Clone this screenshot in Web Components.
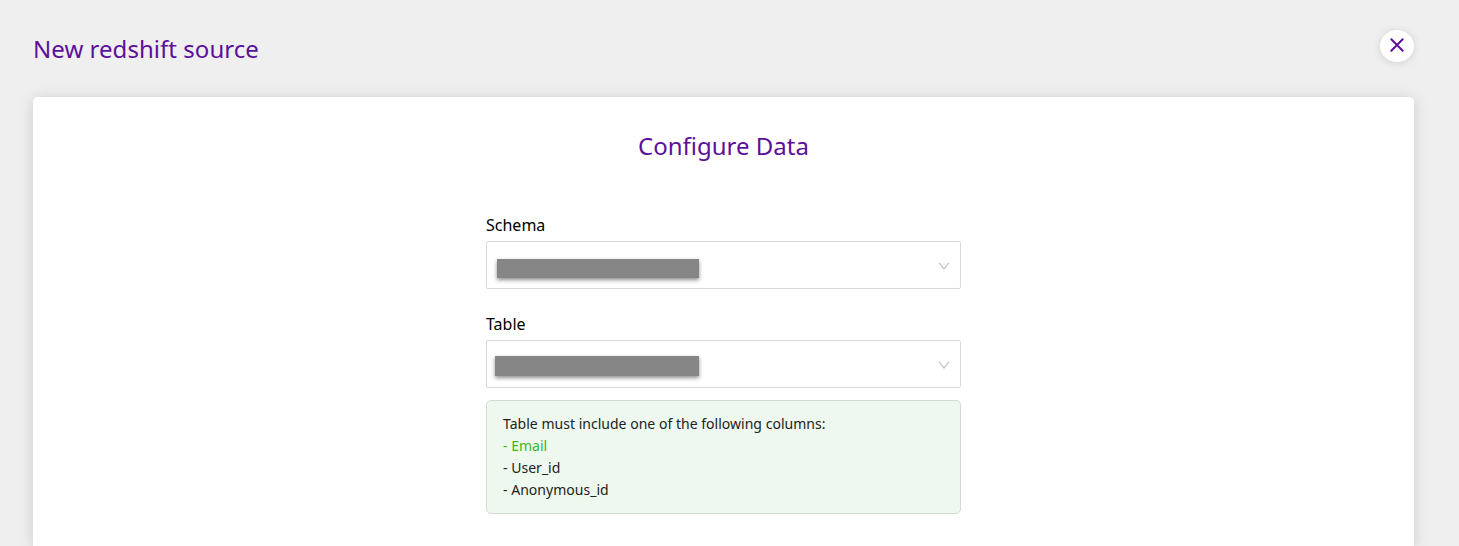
<!DOCTYPE html>
<html lang="en"><head><meta charset="utf-8"><title>New redshift source</title>
<style>html,body{margin:0;height:546px;overflow:hidden;background:#efefef}</style></head>
<body><source-page></source-page>
<script>
const define=(name,html)=>customElements.define(name,class extends HTMLElement{
 constructor(){super();this.attachShadow({mode:'open'}).innerHTML=html;}
});
define('close-button',`<style>:host{display:block}button{box-sizing:border-box;width:34px;height:32px;border:0;border-radius:50%;padding:0 0 2px;background:#fff;box-shadow:0 1px 8px rgba(0,0,0,.13);display:flex;align-items:center;justify-content:center}svg{display:block}</style>
<button aria-label="Close"><svg width="16" height="16" viewBox="0 0 16 16" fill="none" stroke="#5c0f9b" stroke-width="2" stroke-linecap="round"><path d="M2.3 2.3L13.7 13.7M13.7 2.3L2.3 13.7"/></svg></button>`);
define('select-field',`<style>:host{display:block}label{display:block;font-size:16px;line-height:22px;color:#000;margin-bottom:5px}
.box{box-sizing:border-box;height:48px;border:1px solid #d9d9d9;border-radius:2px;background:#fff;display:flex;justify-content:space-between;padding:0 10px 0 var(--inset,10px)}
.value{width:var(--bar-width,202px);height:var(--bar-height,19px);margin-top:var(--bar-top,17px);background:#868686;box-shadow:0 2px 4px rgba(0,0,0,.45)}
svg{display:block;align-self:center;margin-top:1px}</style>
<label><slot></slot></label><div class="box"><div class="value"></div><svg width="12" height="12" viewBox="0 0 12 12" fill="none" stroke="#bfbfbf" stroke-width="1.1"><path d="M1.2 2.8L6 9L10.8 2.8"/></svg></div>`);
define('column-notice',`<style>:host{display:block;box-sizing:border-box;height:114px;border:1px solid #d5d9d4;border-radius:5px;background:#eff8ee;padding:12px 16px;font-size:14px;line-height:22px;letter-spacing:.02px;color:#222}</style><slot></slot>`);
define('config-card',`<style>:host{display:block;box-sizing:border-box;flex:1;margin:0 45px 0 33px;border-radius:5px 5px 0 0;background:#fff;box-shadow:0 2px 15px rgba(0,0,0,.15);padding-top:32px}
h2{margin:0 0 51px;text-align:center;font-weight:400;font-size:24px;line-height:34px;color:#5c0f9b}.form{width:475px;margin:0 auto}</style><h2>Configure Data</h2><div class="form"><slot></slot></div>`);
define('source-page',`<style>:host{display:flex;flex-direction:column;height:546px;overflow:hidden;font-family:"Noto Sans",sans-serif}header{box-sizing:border-box;height:97px;padding:28px 45px 0 33px;display:flex;justify-content:space-between}
h1{margin:4px 0 0;font-weight:400;font-size:24px;line-height:34px;letter-spacing:.04px;color:#5c0f9b}
close-button{margin-top:2px}
.schema{margin-bottom:24px}.table{--inset:8px;--bar-width:203.5px;--bar-height:20.5px;--bar-top:14.5px;margin-bottom:12px}.ok{color:#3eb51a}</style>
<header><h1>New redshift source</h1><close-button></close-button></header>
<config-card><select-field class="schema">Schema</select-field><select-field class="table">Table</select-field>
<column-notice><div>Table must include one of the following columns:</div><div class="ok">- Email</div><div>- User_id</div><div>- Anonymous_id</div></column-notice></config-card>`);
</script></body></html>
